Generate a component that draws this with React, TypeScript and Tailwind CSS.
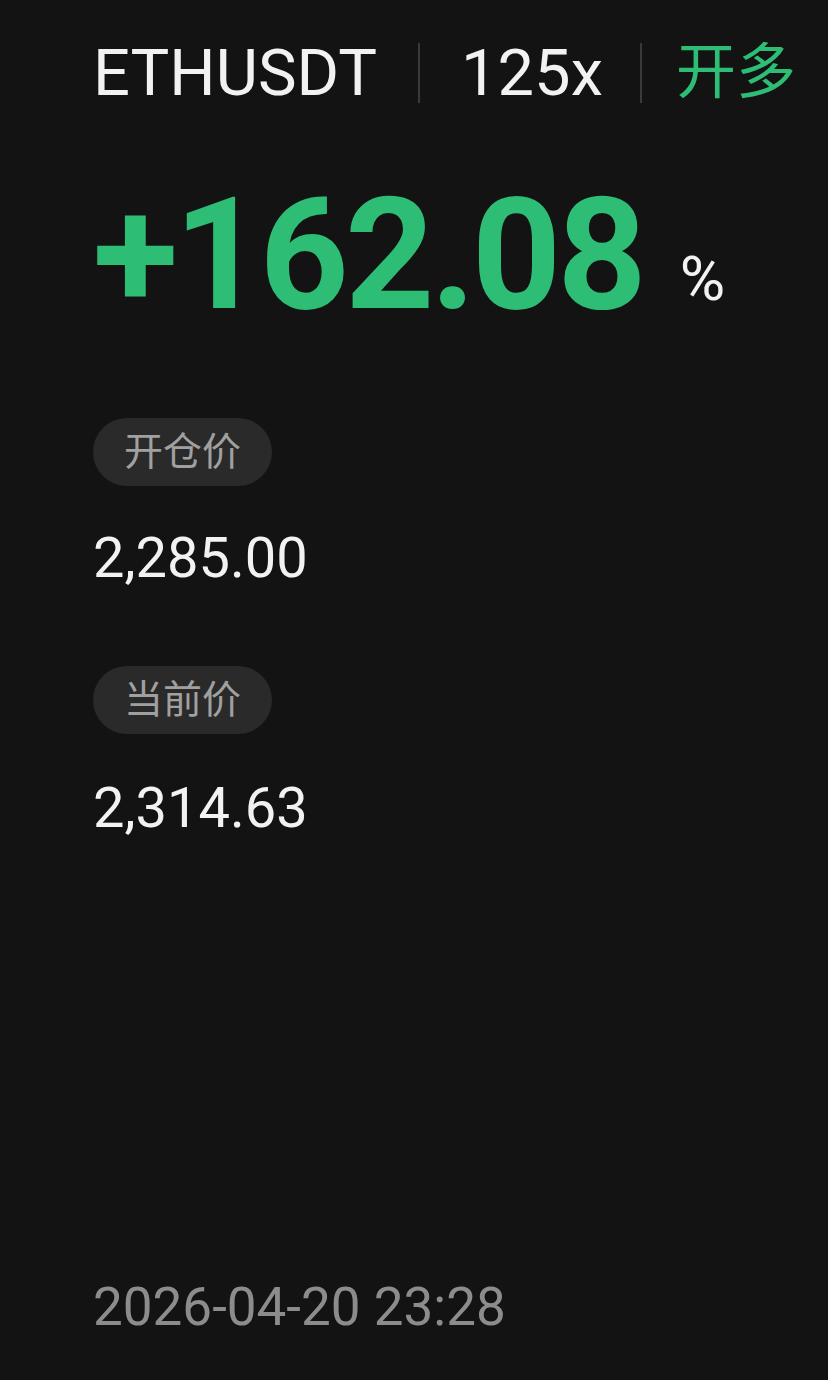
export default function App() {
  return (
    <div
      className="w-[828px] h-[1380px] bg-[#131313] flex flex-col pl-[93px] overflow-hidden"
      style={{ fontFamily: 'Roboto, "Noto Sans CJK SC", sans-serif' }}
    >
      {/* header: symbol | leverage | side */}
      <div className="flex items-center h-[60px] mt-[43px] text-[65px] leading-none text-[#f2f2f2]">
        <span>ETHUSDT</span>
        <div className="w-[2px] h-[60px] bg-[#3a3a3a] mx-[41px]" />
        <span>125x</span>
        <div className="w-[2px] h-[60px] bg-[#3a3a3a] ml-[37px] mr-[34px]" />
        <span className="text-[#2dbd74] text-[60px]">开多</span>
      </div>

      {/* pnl */}
      <div className="flex items-baseline mt-[74px]">
        <span className="text-[156px] font-bold leading-none text-[#2dbd74] tracking-[-4px]">+162.08</span>
        <span className="text-[62px] leading-none text-[#f2f2f2] ml-[37px] relative -top-[8px]">%</span>
      </div>

      <div className="mt-[85px] self-start rounded-full bg-[#2a2a2a] px-[31px] h-[68px] flex items-center text-[39px] text-[#a0a0a0]">
        开仓价
      </div>
      <div className="mt-[44px] text-[56px] leading-none text-[#f2f2f2]">2,285.00</div>

      <div className="mt-[80px] self-start rounded-full bg-[#2a2a2a] px-[31px] h-[68px] flex items-center text-[39px] text-[#a0a0a0]">
        当前价
      </div>
      <div className="mt-[46px] text-[56px] leading-none text-[#f2f2f2]">2,314.63</div>

      <div className="mt-auto mb-[46px] text-[53px] leading-none text-[#8c8c8c]">2026-04-20 23:28</div>
    </div>
  );
}
